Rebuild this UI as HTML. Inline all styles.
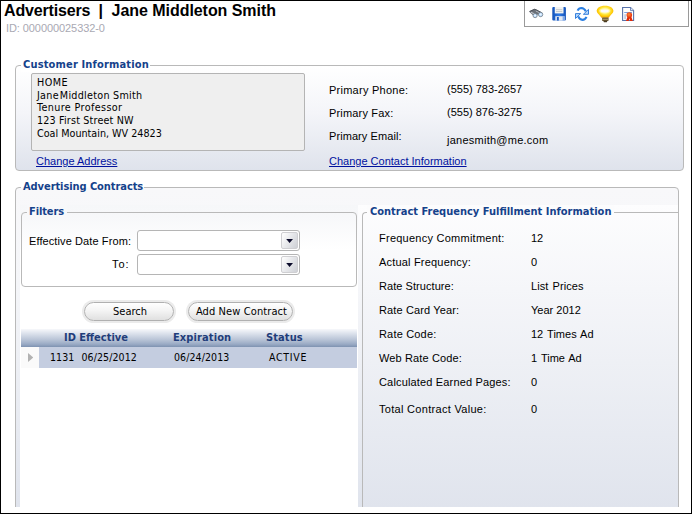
<!DOCTYPE html>
<html>
<head>
<meta charset="utf-8">
<title>Advertisers | Jane Middleton Smith</title>
<style>
html,body{margin:0;padding:0;}
body{width:692px;height:514px;overflow:hidden;background:#fff;position:relative;font-family:"Liberation Sans",Arial,sans-serif;font-size:11px;color:#000;}
.frame{position:absolute;left:0;top:0;width:690px;height:512px;border:1px solid #000;z-index:50;pointer-events:none;}
.abs{position:absolute;}
.title{left:4px;top:1px;font-size:16px;font-weight:bold;line-height:20px;white-space:nowrap;letter-spacing:-0.09px;}
.sub{left:6px;top:21px;font-size:11px;letter-spacing:-0.08px;line-height:14px;color:#a9a9b3;white-space:nowrap;}
.toolbar{left:524px;top:1px;width:165px;height:26px;border:1px solid #9a9a9a;border-top:none;background:#fff;box-sizing:border-box;}
.fs{position:absolute;border:1px solid #b9b9b9;border-radius:4px;box-sizing:border-box;}
.grad{background:linear-gradient(#ffffff 0%,#f4f5f9 45%,#dfe3ec 100%);}
.legend{position:absolute;font-family:"DejaVu Sans Condensed","DejaVu Sans",sans-serif;font-weight:bold;font-size:11px;letter-spacing:0.16px;color:#15428b;background:#fff;white-space:nowrap;line-height:14px;padding:0 1px;}
.grad2{background:linear-gradient(#f8f8fa 0%,#f5f6f9 30%,#e0e4ed 97%);}
.tah{font-family:"DejaVu Sans Condensed","DejaVu Sans",sans-serif;}
.addr{left:31px;top:73px;width:274px;height:78px;border:1px solid #b4b4b4;border-radius:2px;background:#efefef;box-sizing:border-box;}
.addr div{position:absolute;left:5px;white-space:nowrap;font-size:10.7px;line-height:13px;}
a.lnk{position:absolute;color:#00119e;text-decoration:underline;font-size:11px;line-height:14px;white-space:nowrap;}
.lbl{position:absolute;font-size:11px;line-height:14px;white-space:nowrap;letter-spacing:0.25px;}
.val{letter-spacing:0;}
.inp{position:absolute;left:137px;width:163px;height:21px;border:1px solid #b5b5b5;border-radius:3px;background:#fff;box-sizing:border-box;}
.dd{position:absolute;right:1px;top:1px;width:17px;height:17px;border:1px solid #cfcfd2;border-radius:2px;background:linear-gradient(120deg,#fbfbfb 10%,#e6e7ea 50%,#d0d2d7 95%);box-sizing:border-box;}
.dd:after{content:"";position:absolute;left:3.800px;top:5.600px;width:7.600px;height:4.500px;background:#0b0b2a;clip-path:polygon(0 0,100% 0,50% 100%);}
.btn{position:absolute;top:302px;height:19px;border:1px solid #b0b0b0;border-radius:10px;background:linear-gradient(#ffffff,#f4f4f4 45%,#e0e0e0);box-shadow:0 0 0 2px #ebebeb;box-sizing:border-box;text-align:center;font-size:11px;line-height:17px;white-space:nowrap;}
.ghead{left:21px;top:329px;width:336px;height:18px;background:linear-gradient(#f7f8fb 0%,#dce2ec 25%,#bac5d7 58%,#9aabc5 84%,#7e92b1 100%);}
.ghead span{position:absolute;top:2px;font-weight:bold;font-size:11px;letter-spacing:0.11px;line-height:14px;color:#1f3d7a;white-space:nowrap;}
.grow{left:21px;top:347px;width:336px;height:21px;background:#c4cde0;}
.grow span{position:absolute;top:3px;font-size:10.5px;letter-spacing:0.1px;line-height:14px;white-space:nowrap;}
.gind{position:absolute;left:0;top:0;width:18px;height:21px;background:#fafafa;}
.gind:after{content:"";position:absolute;left:7px;top:6px;width:5.300px;height:9px;background:#b2b2b2;clip-path:polygon(0 0,100% 50%,0 100%);}
</style>
</head>
<body>
<div class="abs title" style="letter-spacing:-0.16px;">Advertisers</div><div class="abs title" style="left:98.400px;">|</div><div class="abs title" style="left:111.600px;letter-spacing:-0.05px;">Jane Middleton Smith</div>
<div class="abs sub">ID: 000000025332-0</div>

<div class="abs toolbar">
<svg class="abs" style="left:0;top:0" width="163" height="24" viewBox="525 1 163 24">
 <defs>
  <radialGradient id="gb" cx="0.5" cy="0.42" r="0.62">
   <stop offset="0" stop-color="#fffde8"/><stop offset="0.38" stop-color="#fff060"/><stop offset="0.7" stop-color="#ffcf08"/><stop offset="0.9" stop-color="#f5a400"/><stop offset="1" stop-color="#e88600"/>
  </radialGradient>
  <linearGradient id="gs" x1="0" y1="0" x2="1" y2="0">
   <stop offset="0" stop-color="#1452b8"/><stop offset="0.5" stop-color="#2f7be6"/><stop offset="1" stop-color="#1452b8"/>
  </linearGradient>
  <radialGradient id="gr" cx="0.45" cy="0.4" r="0.6">
   <stop offset="0" stop-color="#ff8a3a"/><stop offset="1" stop-color="#e22a08"/>
  </radialGradient>
 </defs>
 <!-- binoculars -->
 <g>
  <path d="M529 11.500 L534.400 9 L536.600 9.700 L542.400 12.900 L540.600 16.400 L537.800 14.200 L535.400 17.600 L531.600 14 Z" fill="#6a6f77"/>
  <path d="M529.600 11.400 L534.500 9.200 L536.500 9.900 L541.500 12.600" fill="none" stroke="#3f444b" stroke-width="0.800"/>
  <path d="M531 12.300 L534.600 14" fill="none" stroke="#c4c8ce" stroke-width="1.200"/>
  <path d="M535.800 11 L539 12.600" fill="none" stroke="#b0b5bc" stroke-width="1"/>
  <circle cx="535.100" cy="15.600" r="2.100" fill="#b9dcff" stroke="#6c727a" stroke-width="0.700"/>
  <circle cx="540.600" cy="14.500" r="2.200" fill="#b9dcff" stroke="#6c727a" stroke-width="0.700"/>
  <circle cx="535.100" cy="15.600" r="1" fill="#eef7ff"/>
  <circle cx="540.600" cy="14.500" r="1" fill="#eef7ff"/>
 </g>
 <!-- save -->
 <g>
  <rect x="552.300" y="7" width="13.600" height="13.600" rx="1" fill="url(#gs)"/>
  <rect x="554.800" y="7" width="8.700" height="6.400" fill="#f3f3f0"/>
  <rect x="556" y="9.300" width="6.300" height="0.800" fill="#bcc2ca"/>
  <rect x="556" y="11.200" width="6.300" height="0.800" fill="#bcc2ca"/>
  <rect x="555.300" y="16.200" width="9.200" height="4.400" fill="#e4e9f2"/>
  <rect x="556.900" y="17" width="1.900" height="3.600" fill="#1c5cc4"/>
  <rect x="562.600" y="16.200" width="1.900" height="4.400" fill="#7fa8e8"/>
 </g>
 <!-- refresh -->
 <g>
  <path d="M577.600 10.600 Q578.800 8 581.400 8 Q584.400 8.200 585.800 11.400" fill="none" stroke="#2b7fe2" stroke-width="2.100"/>
  <path d="M588.500 9.400 L588.500 14.300 L583.400 14.300 Z" fill="#b4d8fc" stroke="#2473d8" stroke-width="0.900" stroke-linejoin="round"/>
  <path d="M586.500 16.900 Q585.200 19.900 582.400 19.900 Q579.600 19.700 578.200 16.400" fill="none" stroke="#2b7fe2" stroke-width="2.100"/>
  <path d="M575.500 13.600 L580.600 13.600 L575.500 18.500 Z" fill="#b4d8fc" stroke="#2473d8" stroke-width="0.900" stroke-linejoin="round"/>
 </g>
 <!-- bulb -->
 <g>
  <path d="M605 5.700 C610.500 5.700 613.400 8.300 613.400 10.800 C613.400 13.200 610.600 14.600 608.700 17.800 L601.500 17.800 C599.600 14.600 596.700 13.200 596.700 10.800 C596.700 8.300 599.500 5.700 605 5.700 Z" fill="url(#gb)"/>
  <ellipse cx="604.800" cy="10.800" rx="5.600" ry="2.600" fill="#fff9b8" opacity="0.75"/>
  <ellipse cx="604.800" cy="11" rx="4.100" ry="1.400" fill="#fbf9ff"/>
  <rect x="602" y="17.600" width="6.600" height="3.400" rx="0.800" fill="#6a5630"/>
  <rect x="602.300" y="18.800" width="6" height="0.900" fill="#b9a878"/>
  <rect x="603.500" y="20.800" width="3.700" height="1.400" rx="0.600" fill="#4a3c22"/>
 </g>
 <!-- certificate -->
 <g>
  <path d="M622.600 7.500 L630.500 7.500 L633.600 10.600 L633.600 20.500 L622.600 20.500 Z" fill="#fff" stroke="#5872aa" stroke-width="1.100"/>
  <path d="M630.500 7.500 L630.500 10.600 L633.600 10.600" fill="#dfe7f5" stroke="#5872aa" stroke-width="0.800"/>
  <rect x="624.200" y="12" width="7.800" height="0.900" fill="#6f97dd"/>
  <rect x="624.200" y="14.200" width="1.900" height="5" fill="#c3cfe6"/>
  <path d="M627.600 16.500 L626 20.900 L628.700 20.900 L629.500 18.300 L630.100 20.900 L632.800 20.900 L631.200 16.500 Z" fill="#e22a08"/>
  <circle cx="629.300" cy="15.100" r="2.800" fill="url(#gr)"/>
 </g>
</svg>
</div>

<!-- Customer Information -->
<div class="fs grad" style="left:15px;top:65px;width:669px;height:106px;"></div>
<div class="legend" style="left:21px;top:58px;padding-left:2px;">Customer Information</div>
<div class="abs addr tah">
 <div style="top:2px;letter-spacing:0.44px">HOME</div>
 <div style="top:15px;letter-spacing:0.27px">Jane<span style="margin-left:1px">Middleton</span> Smith</div>
 <div style="top:27px;letter-spacing:0.39px">Tenure Professor</div>
 <div style="top:40px;letter-spacing:0.17px">123 First Street NW</div>
 <div style="top:53px">Coal Mountain, WV 24823</div>
</div>
<a class="lnk" style="left:36px;top:154px;">Change Address</a>
<div class="lbl" style="left:329px;top:83px;">Primary Phone:</div>
<div class="lbl" style="left:329px;top:106px;letter-spacing:0.17px;">Primary Fax:</div>
<div class="lbl" style="left:329px;top:129px;letter-spacing:0.08px;">Primary Email:</div>
<div class="lbl val" style="left:447px;top:82px;">(555) 783-2657</div>
<div class="lbl val" style="left:447px;top:105px;">(555) 876-3275</div>
<div class="lbl val" style="left:447px;top:133px;letter-spacing:0.25px;">janesmith@me.com</div>
<a class="lnk" style="left:329px;top:154px;">Change Contact Information</a>

<!-- Advertising Contracts -->
<div class="fs grad2" style="left:15px;top:187px;width:664px;height:330px;"></div>
<div class="abs" style="left:20px;top:205px;width:338px;height:302px;background:linear-gradient(#f6f7f9 0px,#f7f8fa 12px,#ffffff 45px,#ffffff 100%);"></div>
<div class="abs" style="left:358px;top:205px;width:320px;height:302px;background:linear-gradient(#fdfdfe 0%,#f5f6f9 28%,#e0e4ed 100%);"></div>
<div class="legend" style="left:21px;top:180px;padding-left:2px;letter-spacing:-0.07px;background:linear-gradient(#fff 0,#fff 7px,#f8f8fa 8px,#f8f8fa 100%);">Advertising Contracts</div>

<!-- Filters -->
<div class="fs" style="left:21px;top:212px;width:336px;height:75px;"></div>
<div class="legend" style="left:27px;top:205px;letter-spacing:-0.1px;padding-left:2px;padding-right:3px;background:#f7f8fa;">Filters</div>
<div class="lbl" style="left:29px;top:234px;letter-spacing:0.1px;">Effective Date From:</div>
<div class="lbl" style="left:112px;top:257px;letter-spacing:1px;">To:</div>
<div class="inp" style="top:230px;"><div class="dd"></div></div>
<div class="inp" style="top:254px;"><div class="dd"></div></div>

<div class="btn tah" style="left:84px;width:90px;padding-left:2px;">Search</div>
<div class="btn tah" style="left:188px;width:105px;padding-left:2px;letter-spacing:0.1px;">Add New Contract</div>

<!-- grid -->
<div class="abs ghead tah">
 <span style="left:43px;letter-spacing:0;">ID Effective</span>
 <span style="left:152px;">Expiration</span>
 <span style="left:245px;">Status</span>
</div>
<div class="abs grow tah">
 <div class="gind"></div>
 <span style="left:29px;">1131</span>
 <span style="left:60.500px;">06/25/2012</span>
 <span style="left:153px;">06/24/2013</span>
 <span style="left:248px;letter-spacing:0.72px;">ACTIVE</span>
</div>

<!-- Contract Frequency -->
<div class="fs" style="left:362px;top:212px;width:317px;height:320px;border-right:none;border-bottom:none;border-radius:4px 0 0 0;"></div>
<div class="legend" style="left:367px;top:205px;letter-spacing:0;background:#fcfcfd;padding:0 3px;">Contract Frequency Fulfillment Information</div>
<div class="lbl" style="left:379px;top:231px;">Frequency Commitment:</div>
<div class="lbl" style="left:379px;top:255px;letter-spacing:0.19px;">Actual Frequency:</div>
<div class="lbl" style="left:379px;top:279px;letter-spacing:0.06px;">Rate Structure:</div>
<div class="lbl" style="left:379px;top:303px;letter-spacing:0.135px;">Rate Card Year:</div>
<div class="lbl" style="left:379px;top:327px;letter-spacing:0.18px;">Rate Code:</div>
<div class="lbl" style="left:379px;top:351px;letter-spacing:0.13px;">Web Rate Code:</div>
<div class="lbl" style="left:379px;top:375px;letter-spacing:0.16px;">Calculated Earned Pages:</div>
<div class="lbl" style="left:379px;top:402px;letter-spacing:0.3px;">Total Contract Value:</div>
<div class="lbl val" style="left:531px;top:231px;">12</div>
<div class="lbl val" style="left:531px;top:255px;">0</div>
<div class="lbl val" style="left:531px;top:279px;letter-spacing:0.07px;word-spacing:1px;">List Prices</div>
<div class="lbl val" style="left:531px;top:303px;">Year 2012</div>
<div class="lbl val" style="left:531px;top:327px;letter-spacing:0px;word-spacing:1px;">12 Times Ad</div>
<div class="lbl val" style="left:531px;top:351px;letter-spacing:0px;word-spacing:0.9px;">1 Time Ad</div>
<div class="lbl val" style="left:531px;top:375px;">0</div>
<div class="lbl val" style="left:531px;top:402px;">0</div>

<!-- bottom mask & frame -->
<div class="abs" style="left:1px;top:507px;width:690px;height:6px;background:#fff;"></div>
<div class="frame"></div>
</body>
</html>
